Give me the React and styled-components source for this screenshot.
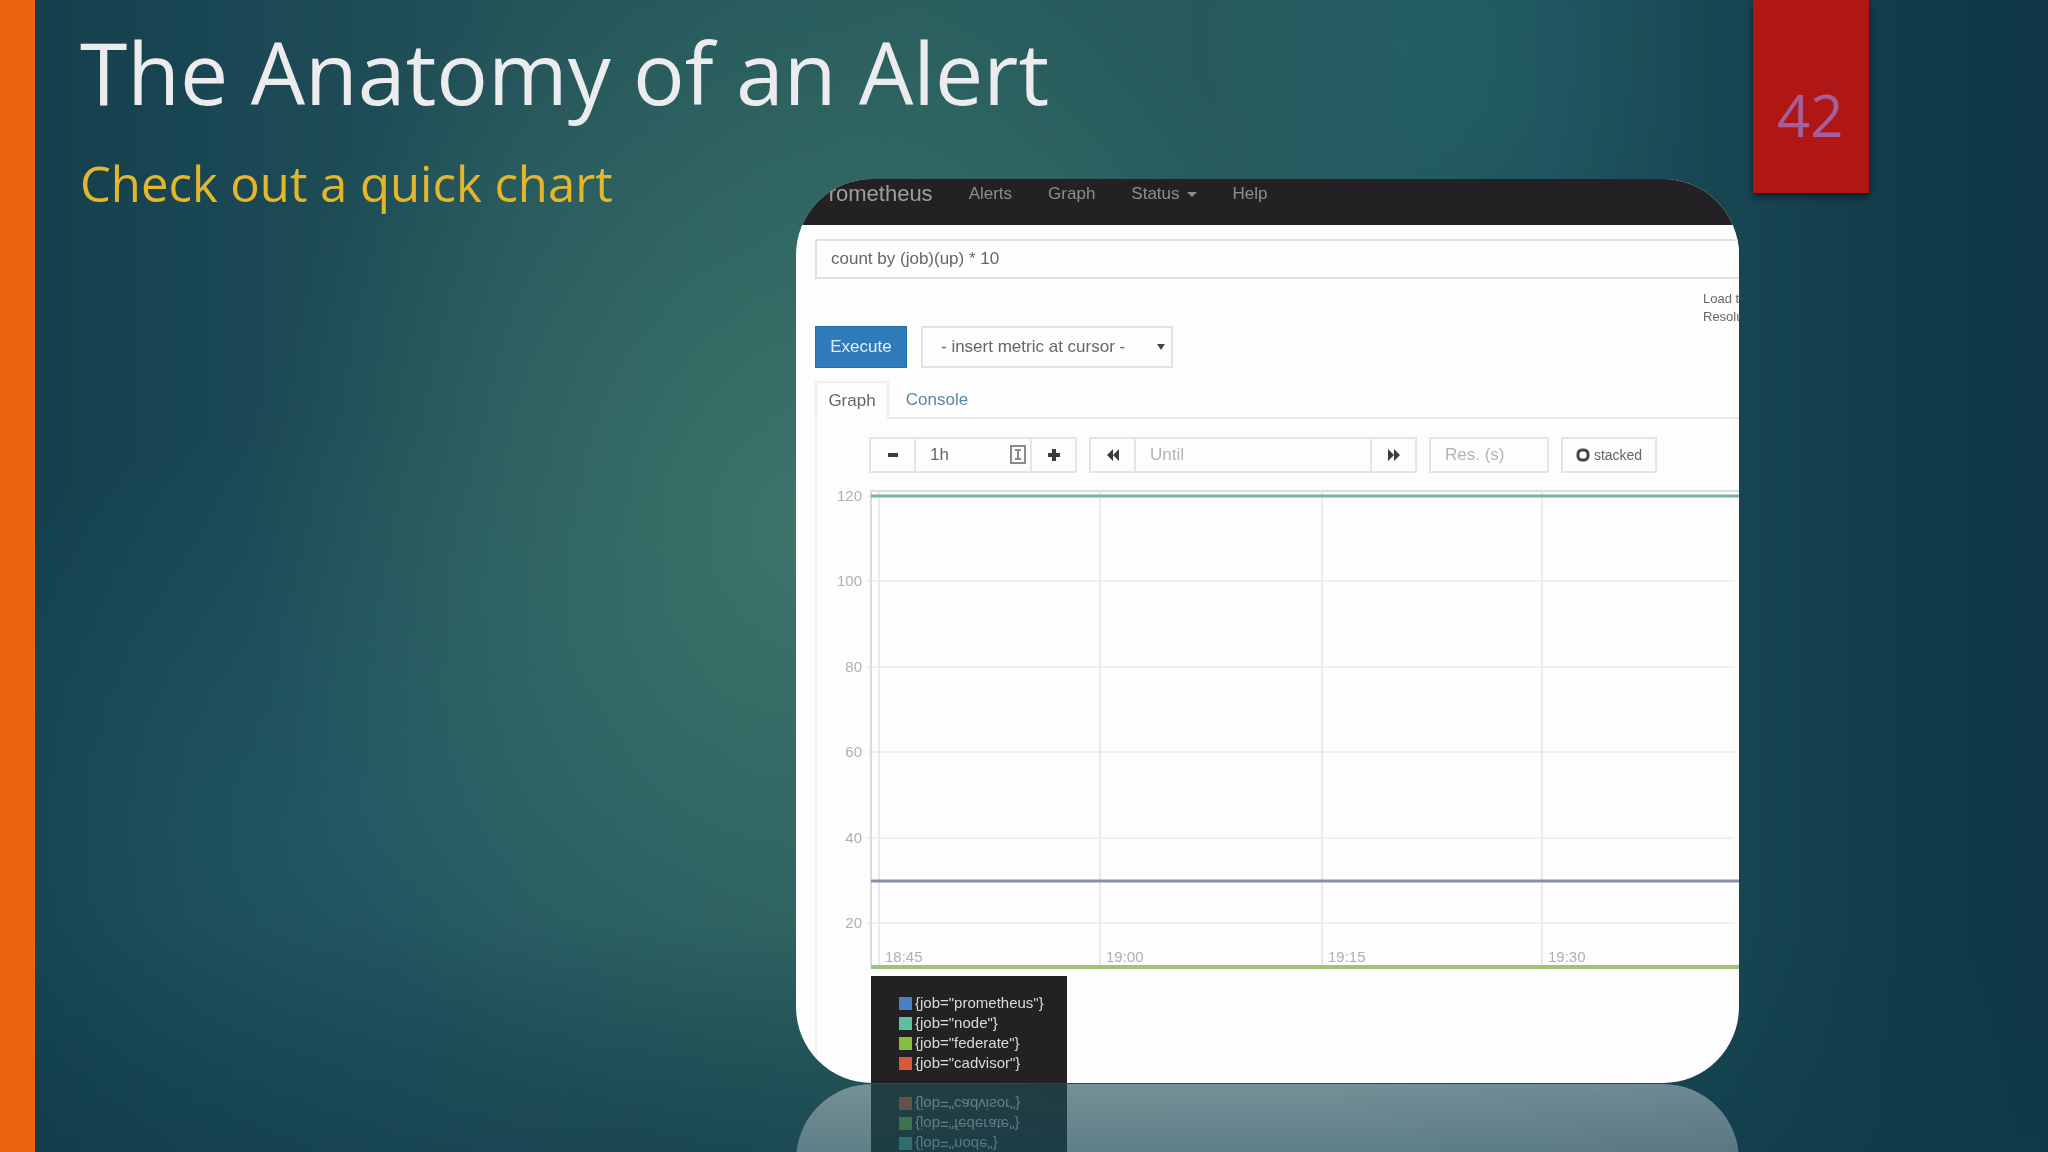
import styled, { createGlobalStyle } from "styled-components";

const yTicks = [
    { label: "120", y: 6 },
    { label: "100", y: 91 },
    { label: "80", y: 177 },
    { label: "60", y: 262 },
    { label: "40", y: 348 },
    { label: "20", y: 433 },
];

const xTicks = [
    { label: "18:45", x: 62 },
    { label: "19:00", x: 283 },
    { label: "19:15", x: 505 },
    { label: "19:30", x: 725 },
];

const jobs = [
    { name: "prometheus", color: "#4a7fc0" },
    { name: "node", color: "#5fbfa5" },
    { name: "federate", color: "#84bf3c" },
    { name: "cadvisor", color: "#d9583a" },
];

export default function App() {
    return (
        <Slide>
            <GlobalStyle />
            <AccentBar />
            <Main>
                <Title>The Anatomy of an Alert</Title>
                <Columns>
                    <SubTitle>Check out a quick chart</SubTitle>
                    <Screen>
                        <Nav>
                            <Brand href="#home">Prometheus</Brand>
                            <NavLink href="#alerts">Alerts</NavLink>
                            <NavLink href="#graph">Graph</NavLink>
                            <NavLink href="#status">Status <Caret /></NavLink>
                            <NavLink href="#help">Help</NavLink>
                        </Nav>
                        <Query aria-label="Expression" defaultValue="count by (job)(up) * 10" />
                        <Stats>
                            <span>Load time</span>
                            <span>Resolution</span>
                        </Stats>
                        <ActionRow>
                            <Execute type="button">Execute</Execute>
                            <MetricBox>
                                <MetricSelect aria-label="Metric">
                                    <option>- insert metric at cursor -</option>
                                </MetricSelect>
                                <Caret $dark />
                            </MetricBox>
                        </ActionRow>
                        <Tabs>
                            <Tab type="button" $active>Graph</Tab>
                            <Tab type="button">Console</Tab>
                        </Tabs>
                        <TabBody>
                            <Controls>
                                <Group>
                                    <IconButton type="button" aria-label="Shrink range">
                                        <svg width="12" height="12"><path d="M1 4h10v4H1z" /></svg>
                                    </IconButton>
                                    <Field $width="118px">
                                        <FieldInput aria-label="Range" defaultValue="1h" />
                                        <svg width="16" height="20" fill="none" stroke="#8a8a8a" strokeWidth="2">
                                            <path d="M1 1h14v17H1zM8 5v9M5 5h6M5 14h6" />
                                        </svg>
                                    </Field>
                                    <IconButton type="button" aria-label="Grow range">
                                        <svg width="14" height="14"><path d="M5 1h4v4h4v4H9v4H5V9H1V5h4z" /></svg>
                                    </IconButton>
                                </Group>
                                <Group>
                                    <IconButton type="button" aria-label="Back in time">
                                        <svg width="12" height="12"><path d="M6 0v12L0 6zM12 0v12L6 6z" /></svg>
                                    </IconButton>
                                    <Field $width="238px">
                                        <FieldInput aria-label="Until" placeholder="Until" />
                                    </Field>
                                    <IconButton type="button" aria-label="Forward in time">
                                        <svg width="12" height="12"><path d="M0 0l6 6-6 6zM6 0l6 6-6 6z" /></svg>
                                    </IconButton>
                                </Group>
                                <Group>
                                    <Field $width="116px">
                                        <FieldInput aria-label="Resolution" placeholder="Res. (s)" />
                                    </Field>
                                </Group>
                                <Stacked type="button">
                                    <svg width="14" height="14" fill="none" stroke="#444" strokeWidth="3">
                                        <rect x="2" y="2" width="10" height="10" rx="4" />
                                    </svg>
                                    stacked
                                </Stacked>
                            </Controls>
                            <Chart />
                            <Legend>
                                {jobs.map((job) => (
                                    <LegendItem key={job.name}>
                                        <Swatch $color={job.color} />
                                        {`{job="${job.name}"}`}
                                    </LegendItem>
                                ))}
                            </Legend>
                        </TabBody>
                    </Screen>
                </Columns>
            </Main>
            <PageNumber>42</PageNumber>
        </Slide>
    );
}

function Chart() {
    return (
        <ChartSvg role="img" aria-label="Job count over time">
            {yTicks.map(({ label, y }) => (
                <g key={label}>
                    <line x1="50" x2="99.5%" y1={y} y2={y} stroke="#f0eef2" strokeWidth="2" />
                    <text x="45" y={y + 5} textAnchor="end">{label}</text>
                </g>
            ))}
            {xTicks.map(({ label, x }) => (
                <g key={label}>
                    <line x1={x} x2={x} y1="0" y2="476" stroke="#ebe9ef" strokeWidth="2" />
                    <text x={x + 6} y="472">{label}</text>
                </g>
            ))}
            <path d="M54 477V0" stroke="#dcdae0" strokeWidth="2" />
            <line x1="54" x2="100%" y1="1" y2="1" stroke="#dcdae0" strokeWidth="2" />
            <line x1="54" x2="100%" y1="6" y2="6" stroke="#76b3a4" strokeWidth="3" />
            <line x1="54" x2="100%" y1="391" y2="391" stroke="#8890a8" strokeWidth="3" />
            <line x1="54" x2="100%" y1="477" y2="477" stroke="#9fc37c" strokeWidth="4" />
        </ChartSvg>
    );
}

const GlobalStyle = createGlobalStyle`
    * {
        box-sizing: border-box;
    }
    body {
        margin: 0;
        background: #123f4c;
    }
    button, input, select {
        font: inherit;
        color: inherit;
        margin: 0;
    }
`

const Slide = styled.div`
    display: flex;
    align-items: flex-start;
    height: 100vh;
    overflow: hidden;
    font-family: "Open Sans", "Noto Sans", sans-serif;
    background:
        linear-gradient(0deg, rgba(16, 58, 74, 0.5), rgba(16, 58, 74, 0) 20%),
        radial-gradient(ellipse 27% 56% at 39% 46%, rgba(74, 136, 116, 0.6), rgba(74, 136, 116, 0) 100%),
        radial-gradient(ellipse 12% 28% at 71% 4%, rgba(40, 108, 114, 0.4), rgba(40, 108, 114, 0) 100%),
        radial-gradient(ellipse 24% 36% at 17% 72%, rgba(38, 98, 112, 0.5), rgba(38, 98, 112, 0) 100%),
        linear-gradient(90deg, #133f4b 0%, #194653 10%, #235259 25%, #275b5c 45%, #25595e 65%, #1d505a 76%, #174551 85%, #113b4a 93%, #0f3746 100%);
`

const AccentBar = styled.div`
    align-self: stretch;
    width: 35px;
    background: #ea6412;
`

const Main = styled.main`
    flex: 1;
    padding: 12px 0 0 45px;
`

const Title = styled.h1`
    margin: 0;
    color: #ececee;
    font-size: 86px;
    font-weight: 400;
    line-height: 120px;
`

const Columns = styled.div`
    display: grid;
    grid-template-columns: 716fr 943fr;
    align-items: start;
    padding-top: 47px;
`

const SubTitle = styled.p`
    margin: -30px 0 0;
    color: #e3b62c;
    font-size: 49px;
    line-height: 68px;
`

const Screen = styled.section`
    overflow: hidden;
    border-radius: 76px;
    background: #fefdfe;
    color: #666;
    font-family: "Liberation Sans", Arial, sans-serif;
    font-size: 17px;
    line-height: 20px;
    -webkit-box-reflect: below 1px linear-gradient(transparent 65%, rgba(0, 0, 0, 0.38));
`

const Nav = styled.nav`
    display: flex;
    gap: 36px;
    height: 46px;
    padding: 5px 0 0 18px;
    background: #242124;
`

const NavLink = styled.a`
    display: flex;
    align-items: center;
    gap: 7px;
    height: 20px;
    color: #8f8d8f;
    text-decoration: none;
`

const Brand = styled(NavLink)`
    color: #a09ea0;
    font-size: 22px;
`

const Caret = styled.span`
    border: ${(props) => (props.$dark ? 4 : 5)}px solid transparent;
    border-top: ${(props) => (props.$dark ? "6px solid #444" : "5px solid #8f8d8f")};
    border-bottom: 0;
`

const Query = styled.input`
    display: block;
    width: calc(100% + 10px);
    height: 40px;
    margin: 14px 0 0 19px;
    padding: 0 14px;
    border: 2px solid #e2e0e4;
    background: #fefdfe;
`

const Stats = styled.div`
    display: flex;
    flex-direction: column;
    width: 36px;
    height: 47px;
    margin-left: auto;
    padding-top: 11px;
    overflow: hidden;
    white-space: nowrap;
    font-size: 13px;
    line-height: 18px;
`

const ActionRow = styled.div`
    display: flex;
    gap: 14px;
    padding-left: 19px;
`

const Execute = styled.button`
    width: 92px;
    height: 42px;
    padding: 0;
    border: 1px solid #2a6da6;
    background: #2f7ab9;
    color: #e4eef6;
`

const MetricBox = styled.div`
    display: flex;
    align-items: center;
    width: 252px;
    height: 42px;
    padding: 0 6px 0 18px;
    border: 2px solid #e2e0e4;
`

const MetricSelect = styled.select`
    flex: 1;
    border: 0;
    appearance: none;
    background: none;
`

const Tabs = styled.div`
    display: flex;
    height: 51px;
    margin-left: 19px;
    padding-top: 13px;
    box-shadow: inset 0 -2px #eceaee;
`

const Tab = styled.button`
    width: ${(props) => (props.$active ? 74 : 96)}px;
    padding: 0;
    border: ${(props) => (props.$active ? "2px solid #f0eef2" : "0")};
    border-bottom: 0;
    background: ${(props) => (props.$active ? "#fefdfe" : "none")};
    color: ${(props) => (props.$active ? "#666" : "#5688a8")};
`

const TabBody = styled.div`
    margin-left: 19px;
    padding-top: 18px;
    border-left: 2px solid #f3f1f3;
`

const Controls = styled.div`
    display: flex;
    gap: 12px;
    padding-left: 52px;
`

const Group = styled.div`
    display: flex;
    height: 36px;
    border: 2px solid #e6e4e8;
`

const IconButton = styled.button`
    display: flex;
    align-items: center;
    justify-content: center;
    width: 43px;
    padding: 0;
    border: 0;
    background: none;
    fill: #3c3c3c;
`

const Field = styled.div`
    display: flex;
    align-items: center;
    width: ${(props) => props.$width};
    padding: 0 4px 0 14px;

    button + & {
        border-left: 2px solid #e6e4e8;
        border-right: 2px solid #e6e4e8;
    }
`

const FieldInput = styled.input`
    flex: 1;
    min-width: 0;
    padding: 0;
    border: 0;
    background: none;

    &::placeholder {
        color: #b4b2b6;
    }
`

const Stacked = styled.button`
    display: flex;
    align-items: center;
    justify-content: center;
    gap: 4px;
    width: 96px;
    padding: 0;
    border: 2px solid #e6e4e8;
    background: none;
    font-size: 14px;
`

const ChartSvg = styled.svg`
    display: block;
    width: 100%;
    height: 486px;
    margin-top: 17px;
    overflow: visible;

    text {
        fill: #b0aeb2;
        font-size: 15px;
    }
`

const Legend = styled.ul`
    width: 196px;
    height: 107px;
    margin: 0 0 0 54px;
    padding: 17px 0 0 28px;
    background: #242124;
    list-style: none;
`

const LegendItem = styled.li`
    display: flex;
    align-items: center;
    gap: 3px;
    color: #dcdadc;
    font-size: 15px;
    line-height: 20px;
`

const Swatch = styled.span`
    width: 13px;
    height: 13px;
    background: ${(props) => props.$color};
`

const PageNumber = styled.div`
    width: 116px;
    height: 193px;
    margin: 0 179px 0 14px;
    padding: 75px 0 0 24px;
    background: #b01613;
    box-shadow: 0 4px 6px rgba(0, 0, 0, 0.5);
    color: #a3609c;
    font-size: 58px;
    line-height: 80px;
`
